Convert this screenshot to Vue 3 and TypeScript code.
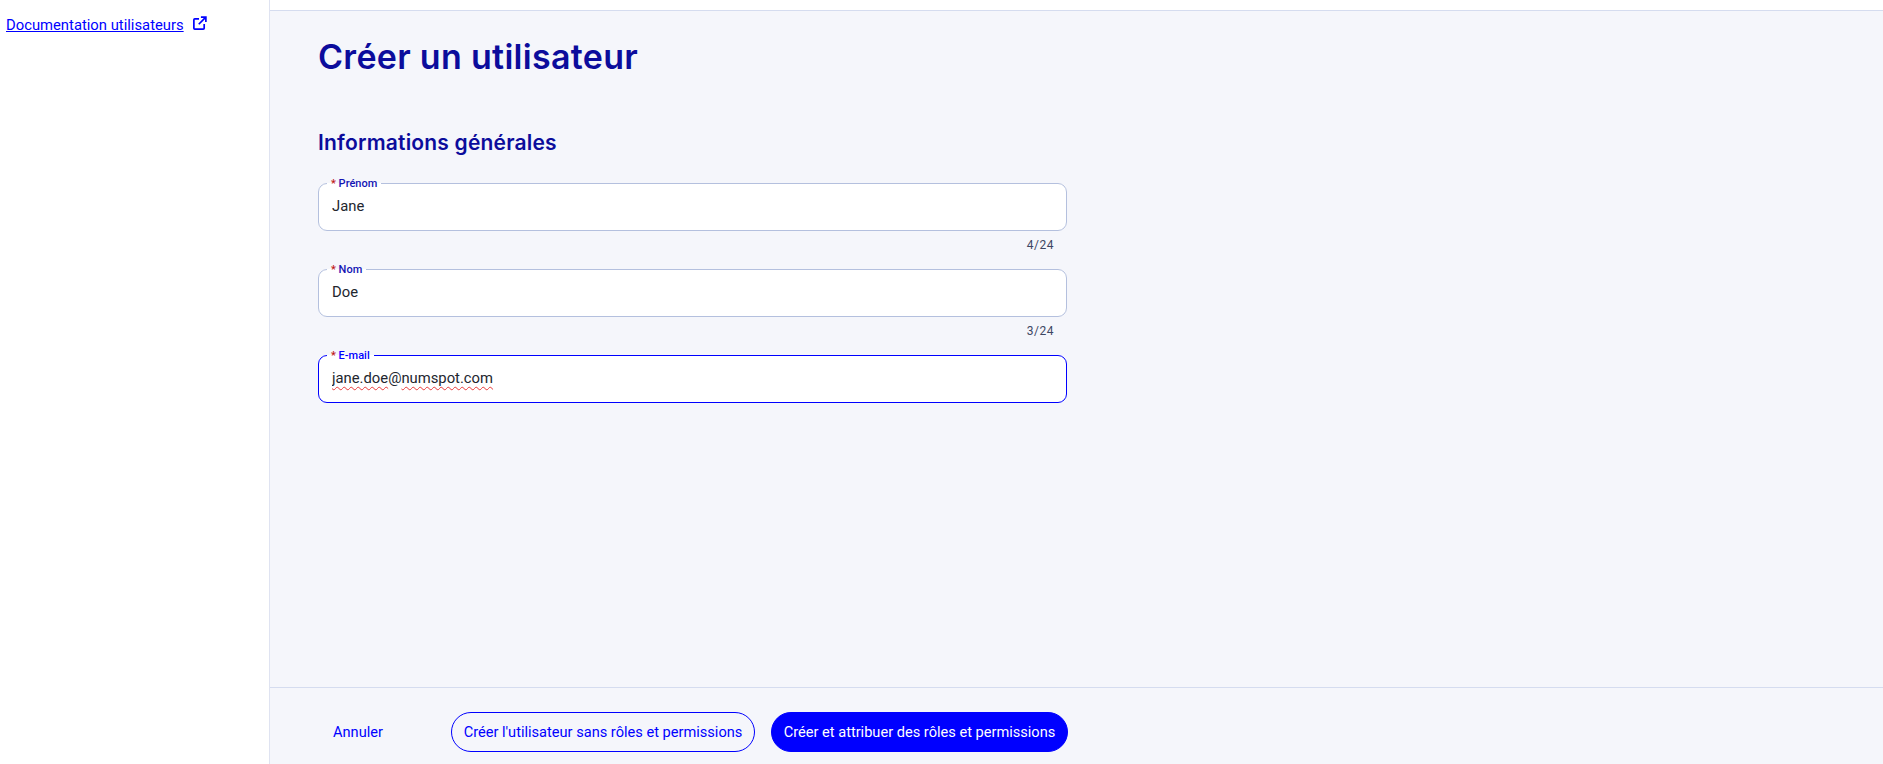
<script setup lang="ts">
import { ref } from 'vue';

interface Field {
  label: string;
  value: string;
  max?: number;
  focused?: boolean;
}

const fields = ref<Field[]>([
  { label: 'Prénom', value: 'Jane', max: 24 },
  { label: 'Nom', value: 'Doe', max: 24 },
  { label: 'E-mail', value: 'jane.doe@numspot.com', focused: true },
]);
</script>

<template>
  <div class="page">
    <aside class="sidebar">
      <a class="doc-link" href="#">
        <span class="doc-text">Documentation utilisateurs</span>
        <svg class="doc-icon" viewBox="0 0 16 16" fill="none" stroke="currentColor" stroke-width="1.8">
          <path d="M7.5 3H3a1 1 0 0 0-1 1v9a1 1 0 0 0 1 1h9a1 1 0 0 0 1-1V8.5" />
          <path d="M9.5 1.2h5.3v5.3M14.5 1.5 7.2 8.8" />
        </svg>
      </a>
    </aside>

    <main class="main">
      <div class="topbar"></div>

      <div class="content">
        <h1 class="title">Créer un utilisateur</h1>
        <h2 class="section-title">Informations générales</h2>

        <form class="form" @submit.prevent>
          <div v-for="field in fields" :key="field.label" class="field">
            <fieldset class="box" :class="{ focused: field.focused }">
              <legend class="legend"><span class="req">*</span> {{ field.label }}</legend>
              <input v-model="field.value" class="input" type="text" />
              <span v-if="field.focused" class="spell" aria-hidden="true"
                ><span class="wavy">jane.doe</span>@<span class="wavy">numspot.com</span></span
              >
            </fieldset>
            <div v-if="field.max" class="counter">{{ field.value.length }}/{{ field.max }}</div>
          </div>
        </form>
      </div>

      <footer class="footer">
        <div class="actions">
          <button class="btn text" type="button">Annuler</button>
          <button class="btn outline" type="button">Créer l'utilisateur sans rôles et permissions</button>
          <button class="btn primary" type="button">Créer et attribuer des rôles et permissions</button>
        </div>
      </footer>
    </main>
  </div>
</template>

<style>
html,
body {
  margin: 0;
  height: 100%;
  overflow: hidden;
}
</style>

<style scoped>
.page {
  display: flex;
  height: 100vh;
  background-color: #fff;
  font-family: Roboto, 'Liberation Sans', sans-serif;
}

.sidebar {
  width: 270px;
  flex-shrink: 0;
  box-sizing: border-box;
  padding: 15px 0 0 6px;
  border-right: 1px solid #dfe3f1;
}

.doc-link {
  display: flex;
  align-items: flex-start;
  gap: 8px;
  color: #0000ff;
  font-size: 14.8px;
  line-height: 20px;
}

.doc-icon {
  width: 15px;
  height: 15px;
  margin-top: 1px;
}

.main {
  flex: 1;
  display: flex;
  flex-direction: column;
  background-color: #f5f6fb;
}

.topbar {
  height: 10px;
  background-color: #fff;
  border-bottom: 1px solid #d5dcef;
}

.content {
  flex: 1;
  padding: 0 0 0 48px;
  width: 749px;
}

.title {
  margin: 24px 0 0;
  font-family: Inter, sans-serif;
  font-size: 34px;
  letter-spacing: 0.3px;
  line-height: 44px;
  font-weight: 600;
  color: #0c0c9c;
}

.section-title {
  margin: 50px 0 0;
  font-family: Inter, sans-serif;
  font-size: 21px;
  letter-spacing: 0.2px;
  line-height: 28px;
  font-weight: 600;
  color: #0c0c9c;
}

.form {
  margin-top: 18px;
}

.field {
  height: 86px;
}

.box {
  position: relative;
  box-sizing: border-box;
  height: 56px;
  margin: 0;
  padding: 0 13px;
  border: 1.25px solid #b4c0de;
  border-radius: 9px;
  background-color: #fff;
  min-width: 0;
}

.box.focused {
  border: 1.5px solid #0000ff;
}

.legend {
  margin-left: -5px;
  padding: 2px 4px 0;
  font-size: 11px;
  line-height: 14px;
  font-weight: 500;
  color: #1414b4;
}

.box.focused .legend {
  color: #0000ff;
}

.req {
  color: #c01818;
}

.input {
  display: block;
  width: 100%;
  height: 30px;
  padding: 0;
  border: none;
  outline: none;
  background: transparent;
  font-family: inherit;
  font-size: 14.8px;
  color: #22262e;
}

.spell {
  position: absolute;
  left: 13px;
  top: 1px;
  line-height: 32px;
  font-size: 14.8px;
  color: transparent;
  pointer-events: none;
}

.wavy {
  text-decoration: underline wavy #e83a3a 1px;
  text-decoration-skip-ink: none;
  text-underline-offset: 1px;
}

.counter {
  margin-top: 6px;
  padding-right: 13px;
  text-align: right;
  font-size: 12px;
  letter-spacing: 0.5px;
  line-height: 16px;
  color: #3d4763;
}

.footer {
  height: 77px;
  box-sizing: border-box;
  flex-shrink: 0;
  border-top: 1px solid #d5dcef;
  padding: 24px 0 0 48px;
}

.actions {
  display: flex;
  gap: 16px;
  width: 750px;
}

.btn {
  height: 40px;
  box-sizing: border-box;
  padding: 0;
  border-radius: 20px;
  border: 1.5px solid #0000ff;
  font-family: inherit;
  font-size: 14.6px;
  color: #0000ff;
  background: transparent;
}

.btn.text {
  width: 80px;
  margin-right: 37px;
  border-color: transparent;
}

.btn.outline {
  width: 304px;
}

.btn.primary {
  width: 297px;
  background-color: #0000ff;
  color: #fff;
}
</style>
